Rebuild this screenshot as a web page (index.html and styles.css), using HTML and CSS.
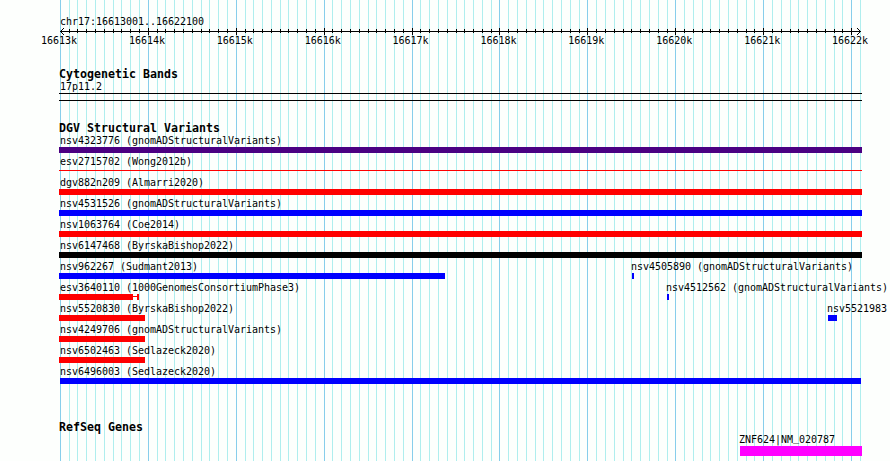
FILE: index.html
```html
<!DOCTYPE html>
<html lang="en">
<head>
  <meta charset="UTF-8">
  <title>chr17:16613001..16622100</title>
  <link rel="stylesheet" href="styles.css">
</head>
<body>

<div class="browser">
  <svg id="grid" class="grid" width="890" height="461"></svg>

  <div class="ruler">
    <div class="label region">chr17:16613001..16622100</div>
    <svg id="axis" class="axis" width="890" height="8"></svg>
    <div class="tick-labels">
      <span>16613k</span>
      <span>16614k</span>
      <span>16615k</span>
      <span>16616k</span>
      <span>16617k</span>
      <span>16618k</span>
      <span>16619k</span>
      <span>16620k</span>
      <span>16621k</span>
      <span>16622k</span>
    </div>
  </div>

  <div class="track bands">
    <h2>Cytogenetic Bands</h2>
    <div class="label">17p11.2</div>
    <div class="band"></div>
  </div>

  <div class="track">
    <h2>DGV Structural Variants</h2>
    <div id="variants"></div>
  </div>

  <div class="track genes">
    <h2>RefSeq Genes</h2>
    <div class="gene">
      <div class="label">ZNF624|NM<span class="underscore">_</span>020787</div>
      <div class="bar magenta"></div>
    </div>
  </div>
</div>

<script src="script.js"></script>
</body>
</html>
```

FILE: styles.css
```css
body {
  margin: 0;
  background: #fdfffd;
  color: #000;
  font-family: "DejaVu Sans Mono", "Liberation Mono", monospace;
}

.browser {
  position: relative;
  width: 890px;
  height: 461px;
  overflow: hidden;
}

/* grid lines run behind every track */
.grid {
  position: absolute;
  top: 0;
  left: 0;
  z-index: -1;
}

.minor {
  fill: #afeeee;
}

.major {
  fill: #87ceeb;
}

.label {
  height: 12px;
  padding-left: 1px;
  font-size: 10px;
  line-height: 12px;
  letter-spacing: -0.02px;
  white-space: nowrap;
}

.ruler {
  padding-top: 16px;
}

.region {
  margin-left: 59px;
}

.axis {
  display: block;
}

.tick-labels {
  display: flex;
  gap: 52px;
  height: 12px;
  margin: -1px 0 0 41px;
  font-size: 10px;
  line-height: 12px;
  letter-spacing: -0.02px;
}

.tick-labels span {
  width: 35.9px;
}

.track {
  margin-left: 59px;
}

.track h2 {
  height: 13px;
  margin: 0;
  font-size: 11.6px;
  line-height: 13px;
  font-weight: bold;
  letter-spacing: 0.016px;
}

.bands {
  height: 54px;
  padding-top: 21px;
}

.band {
  width: 803px;
  height: 6px;
  border-top: 1px solid #000;
  border-bottom: 1px solid #000;
}

.row {
  display: flex;
  height: 21px;
}

.feature {
  flex: none;
  width: 0;
}

.bar {
  height: 6px;
}

.bar.thin {
  height: 1px;
  margin-top: 2px;
}

.segments {
  display: flex;
}

.purple { background: #4b0082; }
.red { background: #f00; }
.blue { background: #00f; }
.black { background: #000; }
.magenta { background: #f0f; }

.genes {
  padding-top: 34px;
}

.gene {
  width: 122px;
  margin: 0 0 0 681px;
}

.gene .label {
  margin-left: -1px;
  padding: 0;
}

/* keep the underscore clear of the bar */
.underscore {
  line-height: 0;
  vertical-align: 2px;
}

.gene .bar {
  height: 10px;
}
```

FILE: script.js
```javascript
const SVG = "http://www.w3.org/2000/svg";
const grid = document.getElementById("grid");
const axis = document.getElementById("axis");
const variants = document.getElementById("variants");

const LEFT = 59;

// each feature: label, colour, pieces as [start, end, thin], label start
const rows = [
  [["nsv4323776 (gnomADStructuralVariants)", "purple", [[59, 862]]]],
  [["esv2715702 (Wong2012b)", "red", [[59, 862, true]]]],
  [["dgv882n209 (Almarri2020)", "red", [[59, 862]]]],
  [["nsv4531526 (gnomADStructuralVariants)", "blue", [[59, 862]]]],
  [["nsv1063764 (Coe2014)", "red", [[59, 862]]]],
  [["nsv6147468 (ByrskaBishop2022)", "black", [[59, 862]]]],
  [["nsv962267 (Sudmant2013)", "blue", [[59, 445]]],
   ["nsv4505890 (gnomADStructuralVariants)", "blue", [[632, 634]], 630]],
  [["esv3640110 (1000GenomesConsortiumPhase3)", "red", [[59, 133], [133, 137, true], [137, 139]]],
   ["nsv4512562 (gnomADStructuralVariants)", "blue", [[667, 669]], 665]],
  [["nsv5520830 (ByrskaBishop2022)", "red", [[59, 145]]],
   ["nsv5521983", "blue", [[828, 837]], 826]],
  [["nsv4249706 (gnomADStructuralVariants)", "red", [[59, 145]]]],
  [["nsv6502463 (Sedlazeck2020)", "red", [[59, 145]]]],
  [["nsv6496003 (Sedlazeck2020)", "blue", [[60, 861]]]]
];

function rect(parent, x, y, w, h, cls) {
  const r = document.createElementNS(SVG, "rect");
  r.setAttribute("x", x);
  r.setAttribute("y", y);
  r.setAttribute("width", w);
  r.setAttribute("height", h);
  if (cls) r.setAttribute("class", cls);
  parent.appendChild(r);
}

function drawScale() {
  rect(axis, 60, 3, 801, 1);
  for (let i = 0; i <= 91; i++) {
    const x = Math.round(59.91 + i * 800 / 91);
    const major = i % 10 === 0;
    rect(grid, x, 0, 1, 461, major ? "major" : "minor");
    if (i === 0 || i === 91) continue;
    if (major) rect(axis, x, 0, 1, 7);
    else rect(axis, x, 1, 1, 4);
  }
  // arrow heads
  for (let d = 1; d <= 3; d++) {
    rect(axis, 60 + d, 3 - d, 1, 1);
    rect(axis, 60 + d, 3 + d, 1, 1);
    rect(axis, 860 - d, 3 - d, 1, 1);
    rect(axis, 860 - d, 3 + d, 1, 1);
  }
}

function drawVariants() {
  rows.forEach(features => {
    const row = document.createElement("div");
    row.className = "row";
    let cursor = LEFT;
    features.forEach(([name, color, pieces, labelStart = LEFT]) => {
      const feature = document.createElement("div");
      feature.className = "feature";
      feature.style.marginLeft = (labelStart - cursor) + "px";
      cursor = labelStart;

      const label = document.createElement("div");
      label.className = "label";
      label.textContent = name;
      feature.appendChild(label);

      const segments = document.createElement("div");
      segments.className = "segments";
      segments.style.marginLeft = (pieces[0][0] - labelStart) + "px";
      segments.style.width = (pieces[pieces.length - 1][1] - pieces[0][0]) + "px";
      pieces.forEach(([start, end, thin]) => {
        const bar = document.createElement("div");
        bar.className = "bar " + color + (thin ? " thin" : "");
        bar.style.width = (end - start) + "px";
        segments.appendChild(bar);
      });
      feature.appendChild(segments);
      row.appendChild(feature);
    });
    variants.appendChild(row);
  });
}

drawScale();
drawVariants();
```
